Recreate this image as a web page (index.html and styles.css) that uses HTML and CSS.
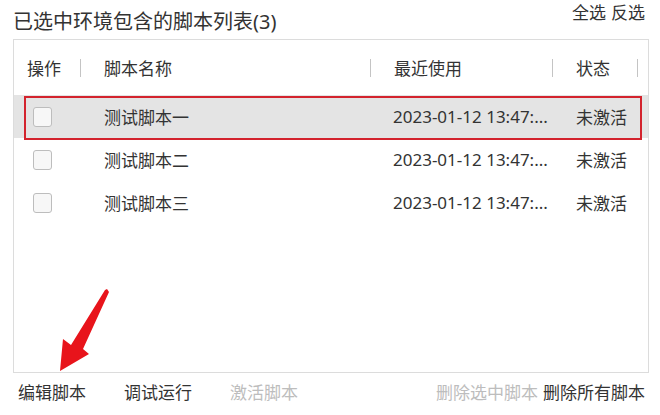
FILE: index.html
```html
<!DOCTYPE html>
<html lang="zh-CN">
<head>
  <meta charset="UTF-8" />
  <title>脚本列表</title>
  <link rel="stylesheet" href="styles.css">
</head>
<body>
  <div class="panel">
    <div class="panel-top">
      <h1 class="title">已选中环境包含的脚本列表(3)</h1>
      <div class="select-links">
        <a class="link">全选</a>
        <a class="link">反选</a>
      </div>
    </div>

    <div class="script-table">
      <div class="table-head">
        <div class="th th-op"><span>操作</span><i class="sep"></i></div>
        <div class="th"><span>脚本名称</span><i class="sep"></i></div>
        <div class="th"><span>最近使用</span><i class="sep"></i></div>
        <div class="th"><span>状态</span><i class="sep"></i></div>
      </div>

      <div class="table-row is-active">
        <div class="td td-op"><span class="checkbox"></span></div>
        <div class="td">测试脚本一</div>
        <div class="td td-date">2023-01-12 13:47:...</div>
        <div class="td">未激活</div>
      </div>
      <div class="table-row">
        <div class="td td-op"><span class="checkbox"></span></div>
        <div class="td">测试脚本二</div>
        <div class="td td-date">2023-01-12 13:47:...</div>
        <div class="td">未激活</div>
      </div>
      <div class="table-row">
        <div class="td td-op"><span class="checkbox"></span></div>
        <div class="td">测试脚本三</div>
        <div class="td td-date">2023-01-12 13:47:...</div>
        <div class="td">未激活</div>
      </div>

      <div class="highlight-box"></div>
    </div>

    <div class="actions">
      <div class="actions-left">
        <a class="action">编辑脚本</a>
        <a class="action">调试运行</a>
        <a class="action disabled">激活脚本</a>
      </div>
      <div class="actions-right">
        <a class="action disabled">删除选中脚本</a>
        <a class="action">删除所有脚本</a>
      </div>
    </div>

    <svg class="arrow" width="60" height="90" viewBox="0 0 60 90">
      <polygon points="52,0 54,3 28,60 34,65 5,82 8,50 16,56 50,1" fill="#e8141b"/>
    </svg>
  </div>
</body>
</html>
```

FILE: styles.css
```css
* {
  margin: 0;
  padding: 0;
  box-sizing: border-box;
}

body {
  background: #fff;
  color: #333;
  font-family: "Noto Sans", "Noto Sans CJK SC", sans-serif;
  font-size: 17px;
}

.panel {
  position: relative;
  width: 660px;
  height: 415px;
  padding: 0 11px 0 13px;
}

.panel-top {
  display: flex;
  justify-content: space-between;
  align-items: flex-start;
  height: 39px;
}

.title {
  font-size: 20px;
  font-weight: 400;
  line-height: 24px;
  padding-top: 10px;
  color: #333;
}

.select-links {
  display: flex;
  gap: 5px;
  padding-top: 2px;
  padding-right: 4px;
  line-height: 22px;
  font-size: 17px;
}

.link {
  color: #333;
  cursor: pointer;
}

.script-table {
  position: relative;
  height: 334px;
  border: 1px solid #dcdcdc;
}

.table-head,
.table-row {
  display: grid;
  grid-template-columns: 67px 290px 182px 85px 1fr;
}

.table-head {
  height: 55px;
  align-items: center;
}

.th {
  display: flex;
  align-items: center;
  justify-content: space-between;
  padding-left: 23px;
}

.th-op {
  padding-left: 13px;
}

.sep {
  display: block;
  width: 1px;
  height: 18px;
  background: #c4c4c4;
}

.table-row {
  height: 43px;
  align-items: center;
}

.table-row.is-active {
  background: #e4e4e4;
}

.td {
  padding-left: 23px;
  white-space: nowrap;
}

.td-op {
  padding-left: 19px;
  display: flex;
}

.td-date {
  padding-left: 22px;
}

.checkbox {
  display: block;
  width: 19px;
  height: 20px;
  border: 1px solid #bdbdbd;
  border-radius: 3px;
  background: #f7f7f7;
}

/* red annotation frame drawn over the first row */
.highlight-box {
  position: absolute;
  left: 10px;
  top: 56px;
  width: 618px;
  height: 44px;
  border: 2px solid #d3232d;
}

.actions {
  display: flex;
  justify-content: space-between;
  padding: 8px 4px 0 5px;
  line-height: 24px;
}

.actions-left {
  display: flex;
  gap: 38px;
}

.actions-right {
  display: flex;
  gap: 5px;
}

.action {
  color: #333;
  cursor: pointer;
}

.action.disabled {
  color: #bdbdbd;
}

.arrow {
  position: absolute;
  left: 55px;
  top: 289px;
}
```
